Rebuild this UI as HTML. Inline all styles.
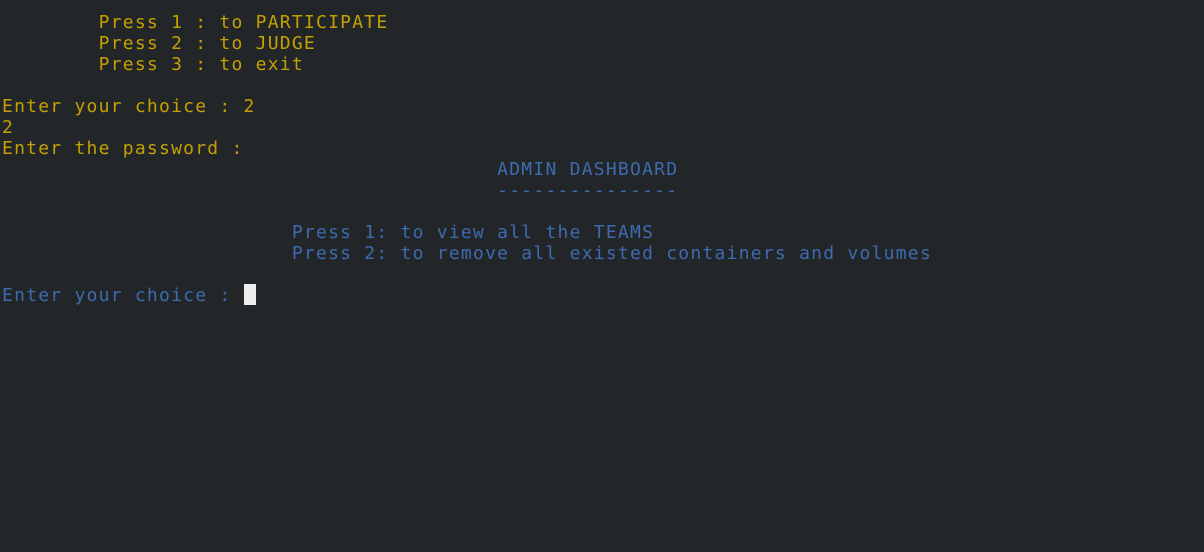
<!DOCTYPE html><html><head><style>
html,body{margin:0;background:#232629;width:1204px;height:552px;overflow:hidden}
pre{margin:0;position:absolute;left:2px;top:12px;font-family:"DejaVu Sans Mono","Liberation Mono",monospace;font-size:18px;letter-spacing:1.24px;line-height:21px;color:#c4a000}
.b{color:#3d6bb0}
.c{display:inline-block;width:12px;height:21px;background:#eeeeee;vertical-align:top;margin-top:-1px}
</style></head><body><pre>        Press 1 : to PARTICIPATE
        Press 2 : to JUDGE
        Press 3 : to exit

Enter your choice : 2
2
Enter the password :
<span class="b">                                         ADMIN DASHBOARD
                                         ---------------

                        Press 1: to view all the TEAMS
                        Press 2: to remove all existed containers and volumes

Enter your choice : </span><span class="c"></span></pre></body></html>
